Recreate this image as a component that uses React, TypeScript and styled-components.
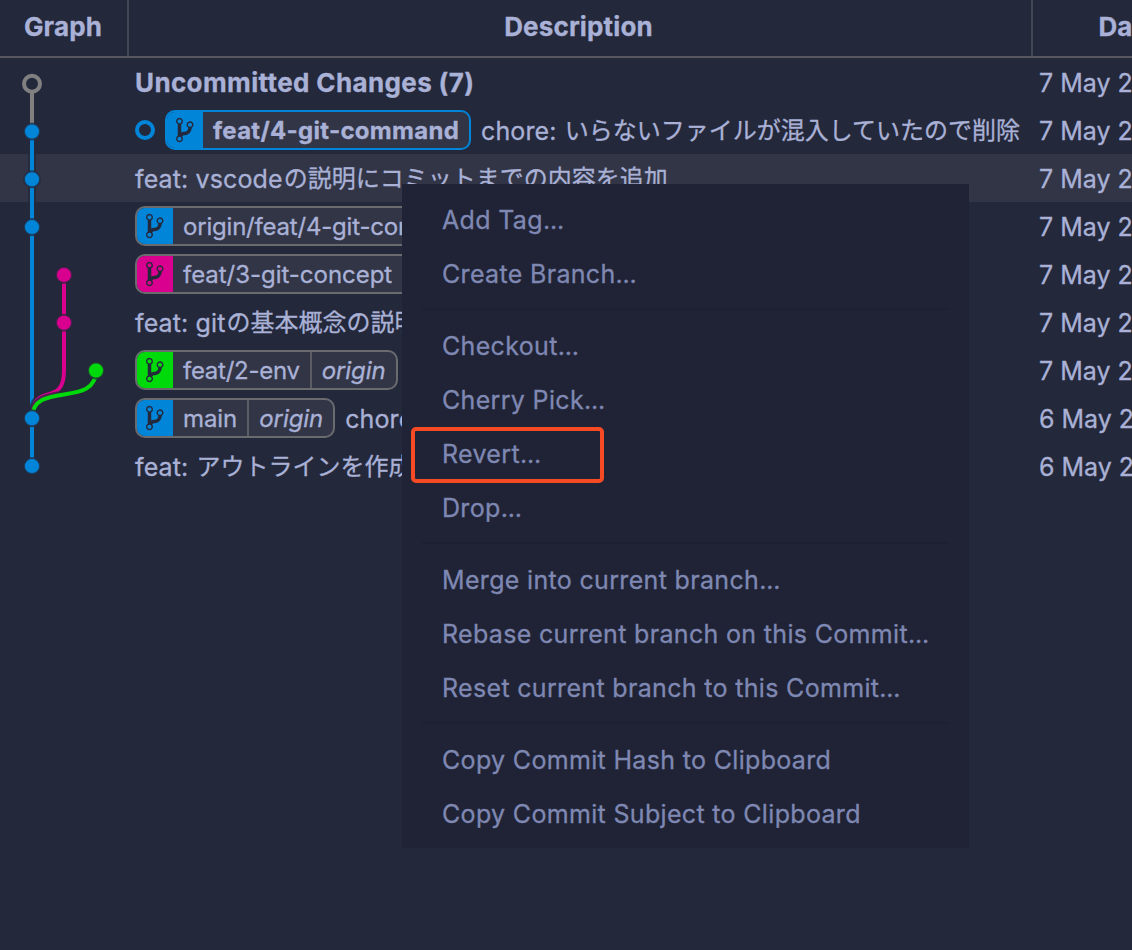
import React from 'react';
import styled, { createGlobalStyle } from 'styled-components';

const c = {
  bg: '#24283b',
  text: '#a9b1d6',
  raised: '#323546',
  menu: '#1f2335',
  menuText: '#7f88b3',
  blue: '#0085d9',
  pink: '#d9008f',
  green: '#00d90a',
  grey: '#808080',
  tagBorder: '#6a6b6f',
};

const Global = createGlobalStyle`
  html, body { margin: 0; background: ${c.bg}; }
  body {
    overflow: hidden;
    color: ${c.text};
    font-family: Inter, "Noto Sans CJK JP", sans-serif;
    font-size: 25px;
    -webkit-text-stroke: 0.3px;
  }
`;

const Page = styled.div`
  position: relative;
  width: 1132px;
  height: 950px;
  overflow: hidden;
  background: ${c.bg};
`;

const columns = '128px 904px 200px';

const Header = styled.div`
  display: grid;
  grid-template-columns: ${columns};
  width: 1232px;
  height: 56px;
  border-bottom: 2px solid #56575f;
`;

const HeaderCell = styled.div<{ $first?: boolean; $shift?: number }>`
  display: flex;
  align-items: center;
  justify-content: center;
  box-sizing: border-box;
  padding-bottom: 3px;
  padding-right: ${(p) => (p.$shift ?? 0)}px;
  font-size: 26px;
  font-weight: 700;
  letter-spacing: 0.15px;
  box-shadow: ${(p) => (p.$first ? 'none' : `-1px 0 0 #434552, inset 1px 0 0 #434552`)};
`;

const Row = styled.div<{ $active?: boolean }>`
  display: grid;
  grid-template-columns: ${columns};
  width: 1232px;
  height: 48px;
  background: ${(p) => (p.$active ? c.raised : 'transparent')};
`;

const Description = styled.div<{ $bold?: boolean }>`
  display: flex;
  align-items: center;
  padding-left: 7px;
  white-space: nowrap;
  overflow: hidden;
  font-size: ${(p) => (p.$bold ? 26 : 25)}px;
  font-weight: ${(p) => (p.$bold ? 700 : 400)};
  letter-spacing: ${(p) => (p.$bold ? 0.37 : 0.12)}px;
`;

const DateCell = styled.div`
  display: flex;
  align-items: center;
  padding: 2px 0 0 7px;
  white-space: nowrap;
`;

const Message = styled.span`
  padding-top: 1px;
  white-space: pre;
`;

const Kana = styled.span`
  margin-left: 1px;
  font-family: "Noto Sans CJK JP", sans-serif;
  font-size: 24px;
  line-height: 1;
  vertical-align: 1px;
  letter-spacing: 0;
`;

const HeadMark = styled.span`
  box-sizing: border-box;
  width: 20px;
  height: 20px;
  margin-right: 10px;
  border: 4px solid ${c.blue};
  border-radius: 50%;
`;

const Tag = styled.span<{ $head?: boolean }>`
  display: flex;
  box-sizing: border-box;
  height: 40px;
  margin-right: 10px;
  border: 2px solid ${(p) => (p.$head ? c.blue : c.tagBorder)};
  border-radius: 10px;
  background: ${c.raised};
  overflow: hidden;
  font-size: 24px;
  font-weight: ${(p) => (p.$head ? 700 : 400)};
`;

const TagIcon = styled.span<{ $color: string }>`
  display: flex;
  align-items: center;
  box-sizing: border-box;
  width: 36px;
  padding-left: 9px;
  background: ${(p) => p.$color};
`;

const TagName = styled.span<{ $tracking?: number }>`
  display: flex;
  align-items: center;
  padding: 1px 10px 0;
  letter-spacing: ${(p) => p.$tracking ?? -0.07}px;
`;

const TagRemote = styled(TagName)`
  border-left: 2px solid #5b5c64;
  font-style: italic;
`;

const Graph = styled.svg`
  position: absolute;
  left: 0;
  top: 58px;
`;

const Menu = styled.div`
  position: absolute;
  left: 402px;
  top: 184px;
  box-sizing: border-box;
  width: 567px;
  height: 664px;
  padding: 8px 20px;
  background: ${c.menu};
  color: ${c.menuText};
  font-size: 25px;
  letter-spacing: 0.33px;
`;

const MenuItem = styled.div`
  position: relative;
  display: flex;
  align-items: center;
  box-sizing: border-box;
  height: 54px;
  padding: 2px 0 0 20px;
  white-space: nowrap;
`;

const Ellipsis = styled.span`
  letter-spacing: -0.2px;
`;

const Separator = styled.div`
  height: 2px;
  margin: 8px 0;
  background: #1e2031;
`;

const Marker = styled.span`
  position: absolute;
  left: -11px;
  top: 1px;
  box-sizing: border-box;
  width: 193px;
  height: 56px;
  border: 4px solid #f64a24;
  border-radius: 5px;
`;

const BranchIcon = () => (
  <svg width="17.5" height="28" viewBox="0 0 10 16" fill={c.bg}>
    <path d="M10 5c0-1.11-.89-2-2-2a1.993 1.993 0 0 0-1 3.72v.3c-.02.52-.23.98-.63 1.38-.4.4-.86.61-1.38.63-.83.02-1.48.16-2 .45V4.72a1.993 1.993 0 0 0-1-3.72C.88 1 0 1.89 0 3a2 2 0 0 0 1 1.72v6.56c-.59.35-1 .99-1 1.72 0 1.11.89 2 2 2 1.11 0 2-.89 2-2 0-.53-.2-1-.53-1.36.09-.06.48-.41.59-.47.25-.11.56-.17.94-.17 1.05-.05 1.95-.45 2.75-1.25S8.95 7.77 9 6.73h-.02C9.59 6.37 10 5.73 10 5zM2 1.8c.66 0 1.2.55 1.2 1.2 0 .65-.55 1.2-1.2 1.2C1.35 4.2.8 3.65.8 3c0-.65.55-1.2 1.2-1.2zm0 12.41c-.66 0-1.2-.55-1.2-1.2 0-.65.55-1.2 1.2-1.2.65 0 1.2.55 1.2 1.2 0 .65-.55 1.2-1.2 1.2zm6-8c-.66 0-1.2-.55-1.2-1.2 0-.65.55-1.2 1.2-1.2.65 0 1.2.55 1.2 1.2 0 .65-.55 1.2-1.2 1.2z" />
  </svg>
);

interface Commit {
  tag?: string;
  tracking?: number;
  remote?: string;
  color?: string;
  head?: boolean;
  latin?: string;
  kana?: string;
  bold?: boolean;
  active?: boolean;
  date: string;
}

const commits: Commit[] = [
  { latin: 'Uncommitted Changes (7)', bold: true, date: '7 May 2024' },
  { tag: 'feat/4-git-command', tracking: 0.28, head: true, color: c.blue, latin: 'chore: ', kana: 'いらないファイルが混入していたので削除', date: '7 May 2024' },
  { latin: 'feat: vscode', kana: 'の説明にコミットまでの内容を追加', active: true, date: '7 May 2024' },
  { tag: 'origin/feat/4-git-command', tracking: -0.2, color: c.blue, date: '7 May 2024' },
  { tag: 'feat/3-git-concept', tracking: -0.03, remote: 'origin', color: c.pink, date: '7 May 2024' },
  { latin: 'feat: git', kana: 'の基本概念の説明', date: '7 May 2024' },
  { tag: 'feat/2-env', tracking: -0.27, remote: 'origin', color: c.green, date: '7 May 2024' },
  { tag: 'main', remote: 'origin', color: c.blue, latin: 'chore: ', date: '6 May 2024' },
  { latin: 'feat: ', kana: 'アウトラインを作成', date: '6 May 2024' },
];

const menuGroups = [
  ['Add Tag...', 'Create Branch...'],
  ['Checkout...', 'Cherry Pick...', 'Revert...', 'Drop...'],
  ['Merge into current branch...', 'Rebase current branch on this Commit...', 'Reset current branch to this Commit...'],
  ['Copy Commit Hash to Clipboard', 'Copy Commit Subject to Clipboard'],
];

const rowY = (i: number) => 25.7 + i * 47.8;

const lines = [
  { d: `M32 ${rowY(0)}V${rowY(1)}`, color: c.grey },
  { d: `M32 ${rowY(1)}V${rowY(8)}`, color: c.blue },
  { d: `M64 ${rowY(4)}V${rowY(6)}C64 ${rowY(6) + 38.4} 32 ${rowY(7) - 38.4} 32 ${rowY(7)}`, color: c.pink },
  { d: `M96 ${rowY(6)}C96 ${rowY(6) + 38.4} 32 ${rowY(7) - 38.4} 32 ${rowY(7)}`, color: c.green },
];

const dots = [
  { x: 32, row: 1, color: c.blue },
  { x: 32, row: 2, color: c.blue },
  { x: 32, row: 3, color: c.blue },
  { x: 64, row: 4, color: c.pink },
  { x: 64, row: 5, color: c.pink },
  { x: 96, row: 6, color: c.green },
  { x: 32, row: 7, color: c.blue },
  { x: 32, row: 8, color: c.blue },
];

const CommitGraph = () => (
  <Graph width="128" height="432" fill="none">
    {lines.map((l) => (
      <React.Fragment key={l.d}>
        <path d={l.d} stroke={c.bg} strokeOpacity={0.75} strokeWidth={8} />
        <path d={l.d} stroke={l.color} strokeWidth={4} />
      </React.Fragment>
    ))}
    <circle cx={32} cy={rowY(0)} r={8} fill={c.bg} stroke={c.grey} strokeWidth={4} />
    {dots.map((d) => (
      <circle key={d.row} cx={d.x} cy={rowY(d.row)} r={8} fill={d.color} stroke={c.bg} strokeOpacity={0.75} strokeWidth={2} />
    ))}
  </Graph>
);

export default function App() {
  return (
    <Page>
      <Global />
      <Header>
        <HeaderCell $first $shift={2}>Graph</HeaderCell>
        <HeaderCell $shift={3}>Description</HeaderCell>
        <HeaderCell $shift={8}>Date</HeaderCell>
      </Header>
      {commits.map((r, i) => (
        <Row key={i} $active={r.active}>
          <span />
          <Description $bold={r.bold}>
            {r.head && <HeadMark />}
            {r.tag && (
              <Tag $head={r.head}>
                <TagIcon $color={r.color!}><BranchIcon /></TagIcon>
                <TagName $tracking={r.tracking}>{r.tag}</TagName>
                {r.remote && <TagRemote>{r.remote}</TagRemote>}
              </Tag>
            )}
            <Message>{r.latin}{r.kana && <Kana>{r.kana}</Kana>}</Message>
          </Description>
          <DateCell>{r.date}</DateCell>
        </Row>
      ))}
      <CommitGraph />
      <Menu>
        {menuGroups.map((group, g) => (
          <React.Fragment key={g}>
            {g > 0 && <Separator />}
            {group.map((label) => (
              <MenuItem key={label}>
                <span>
                  {label.replace('...', '')}
                  {label.endsWith('...') && <Ellipsis>...</Ellipsis>}
                </span>
                {label === 'Revert...' && <Marker />}
              </MenuItem>
            ))}
          </React.Fragment>
        ))}
      </Menu>
    </Page>
  );
}
